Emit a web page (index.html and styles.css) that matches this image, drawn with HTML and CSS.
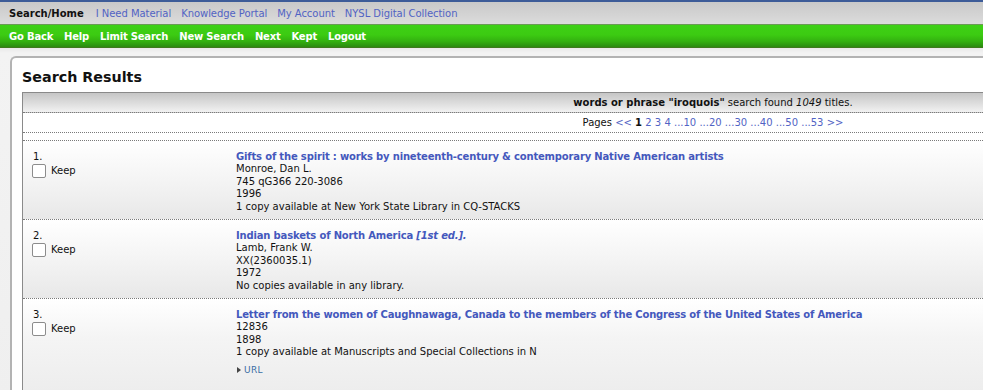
FILE: index.html
```html
<!DOCTYPE html>
<html>
<head>
<meta charset="utf-8">
<title>Search Results</title>
<link rel="stylesheet" href="styles.css">
</head>
<body>
<div class="tabs">
  <span class="tab active">Search/Home</span>
  <a class="tab" href="#">I Need Material</a>
  <a class="tab" href="#">Knowledge Portal</a>
  <a class="tab" href="#">My Account</a>
  <a class="tab" href="#">NYSL Digital Collection</a>
</div>
<div class="navbar">
  <a href="#">Go Back</a>
  <a href="#">Help</a>
  <a href="#">Limit Search</a>
  <a href="#">New Search</a>
  <a href="#">Next</a>
  <a href="#">Kept</a>
  <a href="#">Logout</a>
</div>
<div class="page">
  <div class="panel">
    <h1 class="title">Search Results</h1>
    <div class="results">
      <div class="summary"><b>words or phrase "iroquois"</b> search found <i>1049</i> titles.</div>
      <div class="pages">Pages <a href="#">&lt;&lt;</a> <b>1</b> <a href="#">2</a> <a href="#">3</a> <a href="#">4</a> <a href="#">...10</a> <a href="#">...20</a> <a href="#">...30</a> <a href="#">...40</a> <a href="#">...50</a> <a href="#">...53</a> <a href="#">&gt;&gt;</a></div>
      <div class="spacer"></div>

      <div class="row">
        <div class="keep">
          <div>1.</div>
          <label class="keep-label"><span class="box"></span>Keep</label>
        </div>
        <div class="info">
          <a class="rtitle" href="#">Gifts of the spirit : works by nineteenth-century &amp; contemporary Native American artists</a>
          <div>Monroe, Dan L.</div>
          <div>745 qG366 220-3086</div>
          <div>1996</div>
          <div>1 copy available at New York State Library in CQ-STACKS</div>
        </div>
      </div>

      <div class="row">
        <div class="keep">
          <div>2.</div>
          <label class="keep-label"><span class="box"></span>Keep</label>
        </div>
        <div class="info">
          <a class="rtitle" href="#">Indian baskets of North America <i>[1st ed.].</i></a>
          <div>Lamb, Frank W.</div>
          <div>XX(2360035.1)</div>
          <div>1972</div>
          <div>No copies available in any library.</div>
        </div>
      </div>

      <div class="row last">
        <div class="keep">
          <div>3.</div>
          <label class="keep-label"><span class="box"></span>Keep</label>
        </div>
        <div class="info">
          <a class="rtitle" href="#">Letter from the women of Caughnawaga, Canada to the members of the Congress of the United States of America</a>
          <div>12836</div>
          <div>1898</div>
          <div>1 copy available at Manuscripts and Special Collections in N</div>
          <a class="url" href="#"><span class="tri"></span>URL</a>
        </div>
      </div>
    </div>
  </div>
</div>
</body>
</html>
```
FILE: styles.css
```css
html, body {
  margin: 0;
  padding: 0;
  overflow: hidden;
}
body {
  background: #efefef;
  font-family: "DejaVu Sans", Verdana, sans-serif;
  font-size: 10px;
  color: #111;
  width: 1440px;
}
a { text-decoration: none; }

.tabs {
  border-top: 2px solid #3d5c98;
  height: 22px;
  background: linear-gradient(#c9c9c9, #d4d4d4 60%, #dcdcdc);
  display: flex;
  align-items: center;
  padding-left: 9px;
  gap: 10px;
  font-size: 10px;
}
.tab { color: #5163c4; letter-spacing: -0.05px; }
.tab.active { color: #111; font-weight: bold; font-size: 10px; margin-right: 2px; letter-spacing: 0; }

.navbar {
  height: 22px;
  border-top: 1px solid #6b9a55;
  border-bottom: 1px solid #3f7a1c;
  background: linear-gradient(#3ed016, #3ccb12 45%, #33b010 75%, #2b8a10);
  display: flex;
  align-items: center;
  padding-left: 9px;
  gap: 11px;
}
.navbar a {
  color: #fff;
  font-weight: bold;
  font-size: 10px;
  letter-spacing: -0.2px;
}

.page {
  background: linear-gradient(#e9e9e9, #f3f3f3 5px, #efefef);
  padding: 8px 0 0 10px;
}
.panel {
  background: #fff;
  border: 2px solid #b3b3b3;
  border-right: none;
  border-bottom: none;
  border-top-left-radius: 6px;
  padding: 0 0 0 10px;
  min-height: 340px;
}
.title {
  margin: 0;
  padding: 11px 0 7px 0;
  font-size: 14.3px;
  font-weight: bold;
  color: #111;
  line-height: 16px;
}

.results {
  width: 1380px;
  border-top: 1px solid #8a8a8a;
  border-left: 1px solid #8a8a8a;
}
.summary {
  height: 19px;
  line-height: 19px;
  text-align: center;
  background: linear-gradient(#c6c6c6, #e4e4e4 70%, #f2f2f2);
  border-bottom: 1px dotted #7a7a7a;
}
.pages {
  height: 19px;
  line-height: 19px;
  text-align: center;
  border-bottom: 1px dotted #7a7a7a;
}
.pages a { color: #5163c4; }
.spacer {
  height: 7px;
  border-bottom: 1px dotted #7a7a7a;
}

.row {
  display: grid;
  grid-template-columns: 213px 1fr;
  height: 79px;
  box-sizing: border-box;
  padding-top: 10px;
  line-height: 12.4px;
  background: linear-gradient(#ffffff, #f4f4f4 50%, #e8e8e8);
  border-bottom: 1px dotted #7a7a7a;
}
.row.last {
  height: 100px;
  border-bottom: none;
  background: linear-gradient(#ffffff, #f4f4f4 40%, #ececec);
}
.keep { padding-left: 10px; }
.keep-label {
  display: flex;
  align-items: center;
  gap: 5px;
  margin-left: -1px;
}
.box {
  width: 12px;
  height: 12px;
  border: 1px solid #8c8c8c;
  border-radius: 2px;
  background: #fff;
  margin-top: 1px;
}
.info { display: flex; flex-direction: column; align-items: flex-start; }
.rtitle {
  color: #4458bd;
  font-weight: bold;
  letter-spacing: -0.17px;
}
.url {
  margin-top: 5px;
  color: #3a6ea5;
  font-size: 9px;
  letter-spacing: 0.3px;
  display: flex;
  align-items: center;
  gap: 3px;
}
.tri {
  width: 0;
  height: 0;
  border-left: 4px solid #444;
  border-top: 3px solid transparent;
  border-bottom: 3px solid transparent;
  margin-left: 1px;
}
```
